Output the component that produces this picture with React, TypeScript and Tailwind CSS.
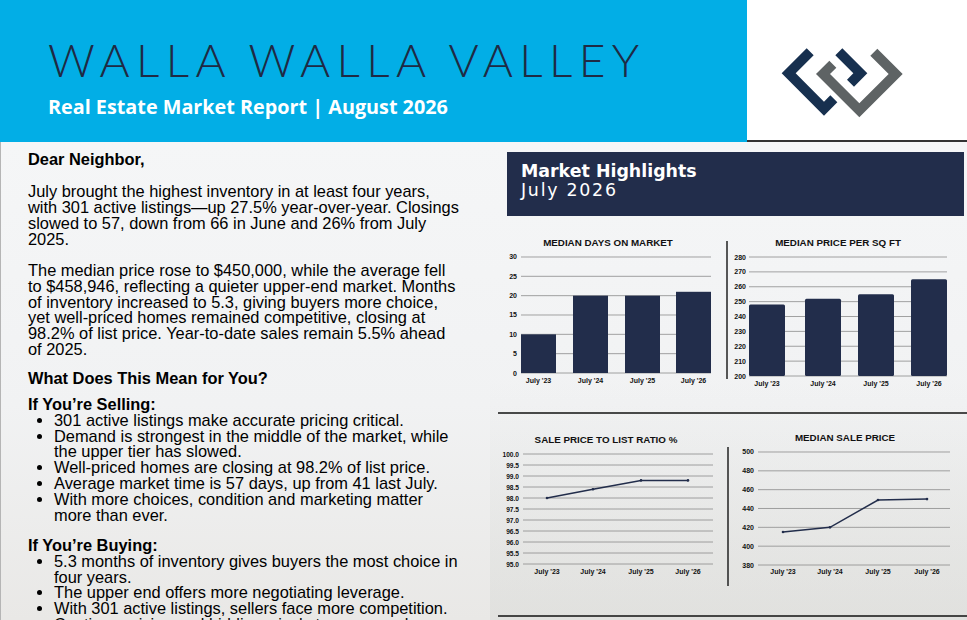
import React from "react";

const NAVY = "#222d4b";
const GRID = "#8c8c8c";

const sellingPoints = [
  "301 active listings make accurate pricing critical.",
  "Demand is strongest in the middle of the market, while the upper tier has slowed.",
  "Well-priced homes are closing at 98.2% of list price.",
  "Average market time is 57 days, up from 41 last July.",
  "With more choices, condition and marketing matter more than ever.",
];

const buyingPoints = [
  "5.3 months of inventory gives buyers the most choice in four years.",
  "The upper end offers more negotiating leverage.",
  "With 301 active listings, sellers face more competition.",
  "Continue pricing and bidding wisely to secure value.",
];

const years = ["July '23", "July '24", "July '25", "July '26"];

function Logo() {
  return (
    <svg width="160" height="120" viewBox="0 0 480 360">
      <polygon
        fill="#17304f"
        points="140,85 65,160 192,287 232,247 211,226 192,245 107,160 161,106"
      />
      <polygon
        fill="#5e6364"
        points="208,122 168,162 298,292 428,162 352,86 331,107 386,162 298,250 210,162 229,143"
      />
      <polygon fill="#17304f" points="247,85 322,160 282,200 261,179 280,160 226,106" />
    </svg>
  );
}

function Label(props: React.SVGProps<SVGTextElement>) {
  return <text fontFamily="'Liberation Sans', Arial, sans-serif" fontWeight={700} fill="#111" {...props} />;
}

function TopCharts() {
  const d1 = [10, 20, 20, 21];
  const x1 = [521, 573, 625, 676];
  const y1 = (v: number) => 374 - v * 3.867;
  const d2 = [248, 252, 255, 265];
  const x2 = [749, 805, 858, 911];
  const y2 = (v: number) => 377 - (v - 200) * 1.4875;

  return (
    <svg width="477" height="196" viewBox="490 217 477 196" className="block">
      <Label x={608} y={247} fontSize={9.8} textAnchor="middle">
        MEDIAN DAYS ON MARKET
      </Label>
      {[0, 5, 10, 15, 20, 25, 30].map((v) => (
        <g key={v}>
          <line x1={521} x2={711} y1={y1(v)} y2={y1(v)} stroke={GRID} strokeWidth={0.8} />
          <Label x={517} y={y1(v) + 2.5} fontSize={7} textAnchor="end">
            {v}
          </Label>
        </g>
      ))}
      {d1.map((v, i) => (
        <g key={i}>
          <rect x={x1[i]} y={y1(v)} width={35} height={v * 3.867} fill={NAVY} />
          <Label x={x1[i] + 17.5} y={384} fontSize={7} textAnchor="middle">
            {years[i]}
          </Label>
        </g>
      ))}

      <line x1={727} x2={727} y1={242} y2={380} stroke="#222" strokeWidth={1.5} />

      <Label x={838} y={247} fontSize={9.8} textAnchor="middle">
        MEDIAN PRICE PER SQ FT
      </Label>
      {[200, 210, 220, 230, 240, 250, 260, 270, 280].map((v) => (
        <g key={v}>
          <line x1={749} x2={947} y1={y2(v)} y2={y2(v)} stroke={GRID} strokeWidth={0.8} />
          <Label x={746} y={y2(v) + 2.5} fontSize={7} textAnchor="end">
            {v}
          </Label>
        </g>
      ))}
      {d2.map((v, i) => (
        <g key={i}>
          <rect x={x2[i]} y={y2(v)} width={36} height={(v - 200) * 1.4875} rx={1.5} fill={NAVY} />
          <Label x={x2[i] + 18} y={387} fontSize={7} textAnchor="middle">
            {years[i]}
          </Label>
        </g>
      ))}
    </svg>
  );
}

function BottomCharts() {
  const x3 = [547, 593, 641, 688];
  const d3 = [98.0, 98.4, 98.8, 98.8];
  const y3 = (v: number) => 565 - (v - 95) * 22;
  const x4 = [783, 830, 878, 927];
  const d4 = [415, 420, 449, 450];
  const y4 = (v: number) => 566 - (v - 380) * 0.9417;
  const ticks3 = Array.from({ length: 11 }, (_, i) => 95 + i * 0.5);

  return (
    <svg width="477" height="207" viewBox="490 413 477 207" className="block">
      <line x1={498} x2={967} y1={414} y2={414} stroke="#111" strokeWidth={1.5} />

      <Label x={606} y={444} fontSize={9.8} textAnchor="middle">
        SALE PRICE TO LIST RATIO %
      </Label>
      {ticks3.map((v) => (
        <g key={v}>
          <line x1={523} x2={713} y1={y3(v)} y2={y3(v)} stroke={GRID} strokeWidth={0.8} />
          <Label x={519} y={y3(v) + 2.5} fontSize={6.6} textAnchor="end">
            {v.toFixed(1)}
          </Label>
        </g>
      ))}
      <polyline
        points={x3.map((x, i) => `${x},${y3(d3[i])}`).join(" ")}
        fill="none"
        stroke={NAVY}
        strokeWidth={1.5}
      />
      {x3.map((x, i) => (
        <g key={i}>
          <circle cx={x} cy={y3(d3[i])} r={1.3} fill={NAVY} />
          <Label x={x} y={575} fontSize={7} textAnchor="middle">
            {years[i]}
          </Label>
        </g>
      ))}

      <line x1={728} x2={728} y1={448} y2={587} stroke="#222" strokeWidth={1.5} />

      <Label x={845} y={442} fontSize={9.8} textAnchor="middle">
        MEDIAN SALE PRICE
      </Label>
      {[380, 400, 420, 440, 460, 480, 500].map((v) => (
        <g key={v}>
          <line x1={758} x2={950} y1={y4(v)} y2={y4(v)} stroke={GRID} strokeWidth={0.8} />
          <Label x={754} y={y4(v) + 2.5} fontSize={7} textAnchor="end">
            {v}
          </Label>
        </g>
      ))}
      <polyline
        points={x4.map((x, i) => `${x},${y4(d4[i])}`).join(" ")}
        fill="none"
        stroke={NAVY}
        strokeWidth={1.5}
      />
      {x4.map((x, i) => (
        <g key={i}>
          <circle cx={x} cy={y4(d4[i])} r={1.3} fill={NAVY} />
          <Label x={x} y={575} fontSize={7} textAnchor="middle">
            {years[i]}
          </Label>
        </g>
      ))}

      <line x1={498} x2={967} y1={617} y2={617} stroke="#111" strokeWidth={1.5} />
    </svg>
  );
}

export default function App() {
  return (
    <div className="w-[967px] h-[620px] overflow-hidden bg-white">
      {/* Header */}
      <header className="flex h-[142px]">
        <div className="w-[747px] bg-[#02aee6] pl-[48px] pt-[37px]">
          <h1 className="font-['Lato',sans-serif] text-[46px] leading-[46px] font-light tracking-[0.14em] text-[#1f2a44] whitespace-nowrap">
            WALLA WALLA VALLEY
          </h1>
          <p className="mt-[14px] font-['Open_Sans',sans-serif] text-[19.8px] leading-[20px] font-bold text-white whitespace-nowrap">
            Real Estate Market Report | August 2026
          </p>
        </div>
        <div className="flex-1 bg-white border-b-2 border-[#333]">
          <div className="ml-[13px] mt-[20px]">
            <Logo />
          </div>
        </div>
      </header>

      {/* Body */}
      <div className="flex h-[478px] border-l border-[#b5b5b5] bg-[linear-gradient(180deg,#f5f6f7_0%,#f1f2f3_55%,#e9e8e6_100%)]">
        <div className="w-[489px] pl-[27px] pr-[27px] pt-[10px] font-['Liberation_Sans',Arial,sans-serif] text-[16.4px] leading-[15.8px] text-black">
          <p className="font-bold">Dear Neighbor,</p>
          <p className="mt-[16.5px]">
            July brought the highest inventory in at least four years, with 301 active listings—up 27.5%
            year-over-year. Closings slowed to 57, down from 66 in June and 26% from July 2025.
          </p>
          <p className="mt-[15.5px]">
            The median price rose to $450,000, while the average fell to $458,946, reflecting a quieter
            upper-end market. Months of inventory increased to 5.3, giving buyers more choice, yet
            well-priced homes remained competitive, closing at 98.2% of list price. Year-to-date sales
            remain 5.5% ahead of 2025.
          </p>
          <p className="mt-[13px] font-bold">What Does This Mean for You?</p>
          <p className="mt-[10.5px] font-bold">If You’re Selling:</p>
          <ul className="list-disc pl-[26px]">
            {sellingPoints.map((s) => (
              <li key={s}>{s}</li>
            ))}
          </ul>
          <p className="mt-[14.5px] font-bold">If You’re Buying:</p>
          <ul className="list-disc pl-[26px]">
            {buyingPoints.map((s) => (
              <li key={s}>{s}</li>
            ))}
          </ul>
        </div>

        <div className="flex-1 flex flex-col bg-[linear-gradient(180deg,rgba(255,255,255,0)_50%,rgba(205,208,204,0.3)_100%)]">
          <div className="mt-[10px] ml-[17px] mr-[3px] h-[64px] bg-[#222d4b] pl-[14px] pt-[10px] font-['DejaVu_Sans',sans-serif] text-[17.4px] leading-[19px] text-white">
            <p className="font-bold">Market Highlights</p>
            <p className="tracking-[0.1em]">July 2026</p>
          </div>
          <TopCharts />
          <BottomCharts />
        </div>
      </div>
    </div>
  );
}
